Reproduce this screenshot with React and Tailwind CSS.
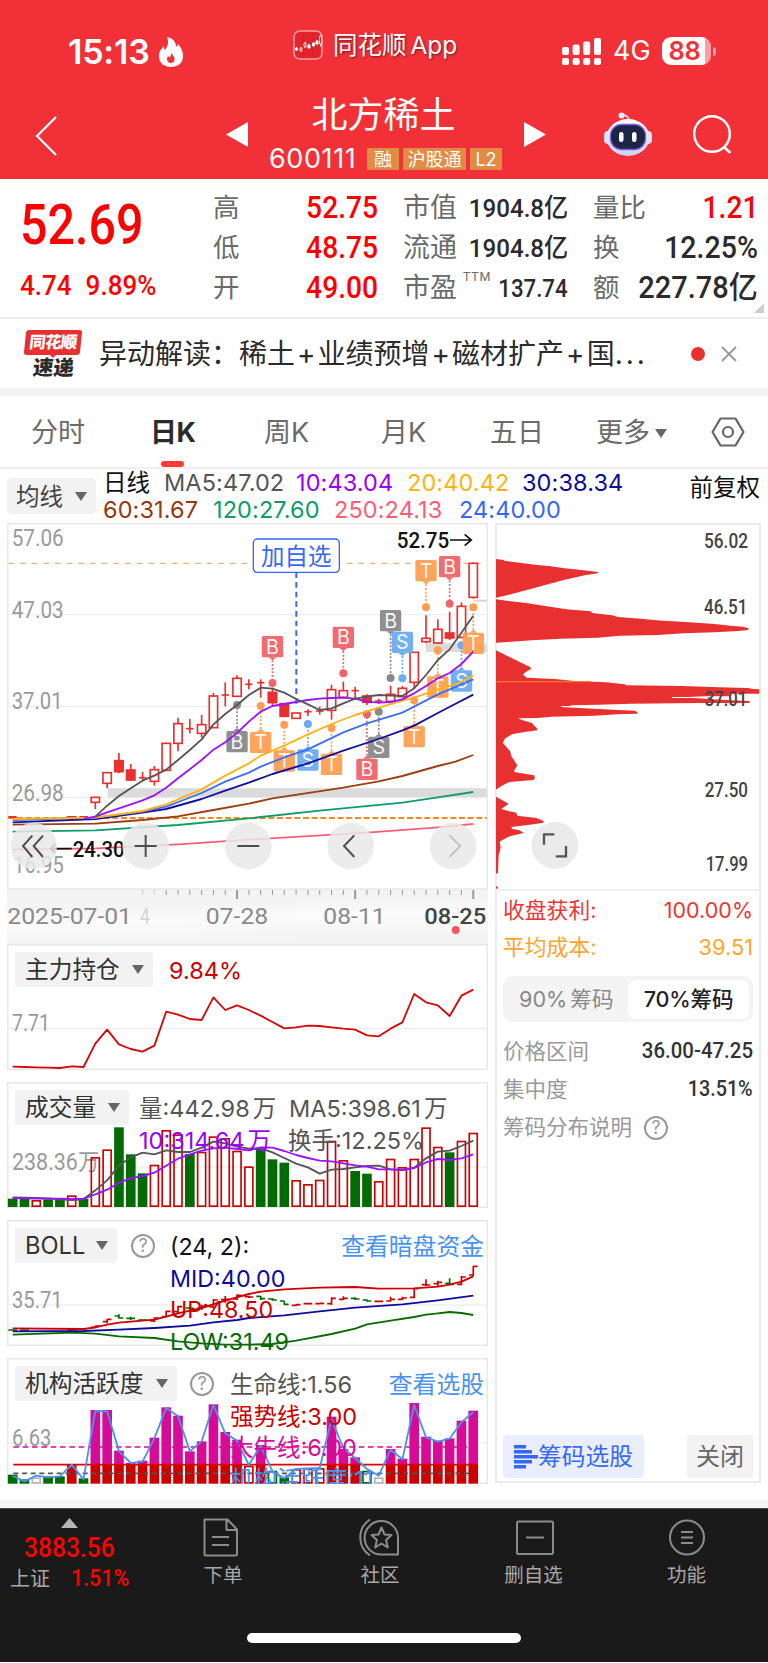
import React, { useState } from 'react';

const CN = 'font-["Inter","Noto_Sans_CJK_SC",sans-serif]';
const DIN = 'font-["Roboto","Noto_Sans_CJK_SC",sans-serif]';

// horizontal position of the n-th trading day, chart units are 1/3 px
const cx = (i) => 38 + i * 35.43;
const series = (ys, start = 0) => ys.map((y, i) => `${cx(i + start).toFixed(1)},${y}`).join(' ');
const pairs = (pts) => pts.map(([i, y]) => `${cx(i).toFixed(1)},${y}`).join(' ');

// [day, bodyTop, bodyBottom, high, low, filled]
const candles = [
  [7, 847, 862, 847, 882], [8, 773, 805, 773, 820], [9, 737, 770, 714, 775, 1], [10, 765, 795, 747, 798, 1],
  [11, 788, 788, 771, 795], [12, 764, 799, 753, 812], [13, 685, 766, 683, 768], [14, 626, 685, 608, 709],
  [15, 641, 641, 612, 655], [16, 629, 655, 600, 668], [17, 543, 638, 534, 638], [18, 540, 540, 502, 574],
  [19, 490, 544, 481, 546], [20, 508, 508, 493, 523], [21, 503, 503, 493, 548], [22, 532, 563, 518, 573, 1],
  [23, 566, 604, 564, 606, 1], [24, 594, 610, 594, 610], [25, 590, 590, 583, 603], [26, 588, 588, 575, 599],
  [27, 524, 586, 509, 614], [28, 527, 547, 500, 549], [29, 527, 527, 515, 550], [30, 543, 562, 538, 570, 1],
  [31, 558, 558, 551, 566], [32, 538, 559, 512, 562], [33, 520, 545, 513, 547], [34, 412, 502, 412, 520],
  [35, 370, 380, 301, 385], [36, 343, 384, 313, 386], [37, 354, 369, 290, 375, 1], [38, 274, 367, 262, 370],
  [39, 145, 247, 142, 251],
];

const ma5 = [905, 872, 843, 820, 797, 782, 764, 735, 705, 673, 628, 597, 570, 540, 518, 521, 533, 552, 568, 585, 580, 565, 551, 545, 540, 542, 543, 520, 480, 435, 403, 353, 302];
const ma10 = [911, 905, 892, 880, 868, 856, 841, 818, 790, 763, 735, 704, 682, 654, 620, 590, 573, 567, 561, 555, 551, 549, 548, 551, 560, 563, 561, 553, 535, 513, 490, 474, 447, 410];
const maLines = [
  ['#ff5c78', [[0, 1004], [7, 1000], [14, 988], [20, 974], [30, 953], [36, 937], [39, 927]]],
  ['#0e9c69', [[0, 950], [7, 946], [14, 930], [20, 910], [26, 887], [33, 863], [36, 847], [39, 831]]],
  ['#9c3d12', [[0, 929], [7, 926], [11, 915], [14, 904], [17, 885], [20, 866], [22, 850], [28, 818], [31, 799], [33, 783], [36, 753], [37.5, 740], [39, 720]]],
  ['#1210a0', [[0, 922], [7, 912], [11, 893], [13, 882], [16, 852], [18, 827], [20, 803], [22, 777], [25, 745], [28, 707], [31, 672], [33, 646], [34, 632], [36, 594], [37.3, 570], [39, 539]]],
  ['#3f6df0', [[0, 915], [7, 908], [11, 890], [13, 875], [16, 834], [18, 800], [20, 773], [21, 755], [23, 727], [25, 703], [28, 652], [30, 625], [33, 593], [36, 538], [39, 493]]],
  ['#ffb215', [[0, 912], [7, 908], [11, 888], [13, 868], [15, 838], [16, 823], [18, 782], [20, 745], [21, 722], [23, 692], [25, 658], [27, 627], [29, 600], [31, 578], [33, 557], [34, 548], [36, 523], [37.6, 507], [39, 482]]],
];

const RED = '#ee6568';
const ORANGE = '#ff9f52';
const BLUE = '#6cabf2';
const GRAY = '#898989';
// [letter, color, day, boxCenterY, dotY]
const markers = [
  ['B', GRAY, 19, 680, 570], ['B', RED, 22, 395, 504], ['T', ORANGE, 21, 682, 573], ['T', ORANGE, 23, 738, 629],
  ['S', BLUE, 25, 735, 627], ['T', ORANGE, 27, 748, 639], ['B', RED, 28, 367, 475], ['B', RED, 30, 763, 598],
  ['S', GRAY, 31, 697, 590], ['B', GRAY, 32, 317, 489], ['S', BLUE, 33, 382, 490], ['T', ORANGE, 34, 665, 556],
  ['T', ORANGE, 35, 167, 277], ['B', RED, 37, 155, 266], ['T', ORANGE, 36, 516, 406], ['S', BLUE, 38, 498, 391],
  ['T', ORANGE, 39, 385, 277],
];

const holding = [411, 412, 413, 414, 415, 410, 412, 342, 300, 344, 358, 366, 348, 246, 255, 268, 271, 203, 241, 227, 241, 258, 277, 296, 293, 288, 289, 293, 297, 300, 317, 320, 297, 278, 193, 218, 227, 259, 198, 180];

const volume = 'g806 g806 r810 g808 g810 r796 g806 r681 r658 g592 g673 g730 r704 r600 r613 g672 r665 r619 r624 r662 r709 g655 g688 g698 r750 r762 r749 r632 r690 g723 g731 r753 r686 r711 r686 r592 r650 g667 r632 r608'.split(' ');
const vol5 = [802, 803, 804, 805, 808, 810, 808, 781, 751, 707, 682, 668, 673, 661, 666, 666, 653, 635, 640, 650, 656, 655, 667, 684, 701, 712, 731, 719, 717, 712, 708, 707, 718, 720, 713, 685, 665, 662, 648, 632];
const vol10 = [804, 805, 806, 806, 806, 807, 806, 793, 779, 758, 745, 738, 728, 707, 686, 673, 662, 655, 653, 657, 661, 652, 653, 663, 675, 684, 692, 694, 700, 706, 710, 718, 718, 720, 714, 697, 687, 690, 685, 673];

const bollUp = [[0, 353], [6, 355], [7, 350], [8, 342], [9, 336], [12, 327], [13, 318], [14, 308], [15, 300], [16, 292], [18, 270], [20, 250], [21, 243], [23, 236], [26, 231], [29, 229], [31, 234], [34, 233], [36, 228], [37, 222], [38, 213], [39, 197]];
const bollMid = [[0, 362], [6, 361], [9, 357], [12, 352], [15, 345], [17, 335], [19, 328], [20, 322], [23, 314], [26, 302], [29, 291], [33, 281], [36, 269], [39, 255]];
const bollLow = [[0, 372], [5, 366], [7, 369], [9, 377], [12, 382], [14, 392], [16, 398], [18, 402], [20, 402], [22, 400], [24, 390], [27, 370], [29, 354], [30, 341], [32, 330], [34, 319], [35, 312], [36, 308], [37, 304], [38, 307], [39, 313]];
// [day, color, open, high, low, close]
const bollBars = [
  [0, 'g', 358, 357, 360, 358], [1, 'g', 358, 357, 360, 358], [5, 'r', 358, 356, 360, 357], [7, 'r', 350, 345, 352, 346],
  [8, 'r', 333, 325, 338, 326], [9, 'g', 316, 311, 324, 322], [10, 'g', 323, 318, 328, 323], [11, 'g', 328, 326, 330, 328],
  [12, 'r', 331, 320, 334, 322], [13, 'r', 318, 300, 320, 302], [14, 'r', 303, 286, 308, 288], [15, 'g', 292, 288, 296, 293],
  [16, 'r', 292, 282, 298, 287], [17, 'r', 289, 265, 292, 268], [18, 'r', 267, 256, 276, 266], [19, 'r', 265, 251, 268, 254],
  [20, 'r', 258, 255, 262, 259], [21, 'g', 257, 256, 268, 264], [22, 'g', 265, 262, 270, 268], [23, 'g', 271, 271, 282, 281],
  [24, 'r', 284, 281, 287, 282], [25, 'r', 279, 277, 281, 279], [26, 'r', 279, 276, 281, 278], [27, 'r', 279, 260, 283, 263],
  [28, 'r', 266, 257, 268, 263], [29, 'g', 263, 260, 268, 265], [30, 'g', 268, 266, 273, 271], [31, 'r', 272, 270, 274, 272],
  [32, 'r', 271, 258, 273, 266], [33, 'r', 266, 258, 268, 262], [34, 'r', 260, 233, 263, 234], [35, 'r', 222, 206, 226, 223],
  [36, 'r', 219, 210, 226, 215], [37, 'g', 218, 203, 222, 221], [38, 'r', 221, 196, 224, 199], [39, 'r', 193, 166, 196, 167],
];

// m = magenta above the red threshold, upper case = hollow bar
const activity = 'g792 g806 W800 g797 g797 r760 g803 m598 m598 m720 m757 m750 m681 m590 m615 m722 m692 m581 m664 m687 R765 m703 G780 g800 R775 R773 R772 m618 m715 m740 G780 W800 m715 m744 m577 m678 m690 m683 m630 m600'.split(' ');
const activityLine = [796, 812, 795, 800, 797, 762, 806, 601, 602, 722, 757, 753, 683, 592, 616, 722, 692, 583, 668, 690, 763, 705, 782, 803, 775, 773, 772, 626, 712, 742, 775, 795, 717, 746, 583, 680, 693, 684, 635, 604];

const barColor = { g: '#046b04', r: '#cc0000', w: '#b5b5b5' };

const chips = 'M34 134 L58 137 L58 139 L110 146 L158 152 L198 156 L240 162 L310 169 L340 173 L340 177 L300 183 L240 196 L160 218 L90 237 L34 250 Z M34 255 L72 260 L125 266 L196 277 L245 285 L318 291 L322 296 L383 303 L400 308 L467 313 L535 319 L603 323 L690 329 L745 335 L775 337 L791 342 L791 347 L760 350 L690 354 L598 357 L520 362 L405 364 L340 370 L226 373 L142 378 L34 385 Z M34 408 L136 458 L140 463 L120 475 L115 481 L126 490 L210 494 L270 500 L365 504 L420 510 L425 513 L590 515 L705 519 L790 521 L805 524 L824 525 L824 538 L735 538 L735 546 L660 546 L612 548 L562 548 L562 551 L630 551 L680 555 L740 558 L795 560 L795 566 L640 566 L440 568 L340 571 L258 573 L258 575 L229 575 L229 578 L328 583 L400 587 L450 589 L458 593 L458 598 L398 600 L330 604 L200 607 L158 611 L100 612 L112 617 L142 626 L158 644 L158 648 L118 653 L82 660 L62 672 L54 685 L76 710 L80 725 L98 753 L88 770 L90 773 L110 777 L148 783 L151 790 L147 797 L74 803 L50 815 L34 826 Z M34 847 L72 868 L50 884 L62 888 L95 895 L98 904 L155 911 L175 919 L177 925 L130 932 L80 938 L82 943 L105 948 L117 956 L75 966 L55 976 L45 982 L48 1000 L42 1022 L40 1076 L34 1078 Z';

function ChartText({ x, y, w, size = 69, fill = '#9a9a9a', weight = 400, children }) {
  return (
    <text x={x} y={y} textLength={w} lengthAdjust="spacingAndGlyphs" fontSize={size} fontWeight={weight} fill={fill} className={DIN}>
      {children}
    </text>
  );
}

function Bars({ data, base, split }) {
  return data.map((item, i) => {
    const kind = item[0];
    const y = Number(item.slice(1));
    const x = cx(i) - 14.5;
    if (kind === 'm') {
      return (
        <g key={i}>
          <rect x={x} y={y} width="29" height={split - y} fill="#d80b98" />
          <rect x={x} y={split} width="29" height={base - split} fill="#cc0000" />
        </g>
      );
    }
    const hollow = kind === kind.toUpperCase() || (!split && kind === 'r');
    const color = barColor[kind.toLowerCase()];
    return hollow ? (
      <rect key={i} x={x + 2.5} y={y + 2.5} width="24" height={base - y - 5} fill="none" stroke={color} strokeWidth="5" />
    ) : (
      <rect key={i} x={x} y={y} width="29" height={base - y} fill={color} />
    );
  });
}

function Line({ points, color, width = 5.5, dash }) {
  return <polyline points={points} fill="none" stroke={color} strokeWidth={width} strokeDasharray={dash} strokeLinejoin="round" />;
}

function Caret({ className = '' }) {
  return (
    <svg viewBox="0 0 12 9" className={`h-[9px] w-3 shrink-0 ${className}`}>
      <path d="M0 0h12L6 9z" fill="#666" />
    </svg>
  );
}

function Help({ className = '' }) {
  return (
    <span className={`flex h-6 w-6 shrink-0 items-center justify-center rounded-full border-2 border-[#999] text-[18px] leading-none text-[#999] ${className}`}>
      ?
    </span>
  );
}

function Picker({ width, children }) {
  return (
    <button type="button" className={`flex h-[35px] shrink-0 items-center justify-between rounded-[3px] bg-[#f2f2f2] pr-[9px] pl-[10px] text-[23.7px] whitespace-nowrap text-[#333] ${width}`}>
      {children}
      <Caret />
    </button>
  );
}

function StatusBar() {
  return (
    <div className="flex h-[92px] items-end text-white">
      <div className="mb-[23px] ml-[68px] flex items-center">
        <span className="w-[83px] text-[34px] leading-[34px] font-semibold tracking-[-0.2px]">15:13</span>
        <svg viewBox="0 0 24 30" className="ml-2 h-[30px] w-6">
          <path d="M8 0c6 1 9 5 9 10 1-1 2-2 2-3 3 3 5 7 5 12 0 7-5 11-12 11S0 26 0 19c0-5 3-8 5-10 0 2 0 3 1 4C9 9 10 5 8 0z" fill="#fff" />
          <path d="M12 15c0 2 3.500 3.500 3.500 7 0 2.500-1.500 4-3.500 4s-4-1.500-4-4c0-1.500.6-2.500 1.500-3.300 0 1 .3 1.700 1 1.600 1.500-.8 1.500-2.300 1.500-5.300z" fill="#f23038" />
        </svg>
      </div>
      <div className="mb-[32px] ml-[110px] flex items-center">
        <svg viewBox="0 0 30 30" className="h-[30px] w-[30px]">
          <rect x="1" y="1" width="28" height="28" rx="6" fill="#e3242b" stroke="#f8a0a3" strokeWidth="1.500" />
          <path d="M10 3v24M20 3v24" stroke="#c91d24" strokeWidth=".7" />
          <g fill="#fff" stroke="#fff">
            <path d="M3.500 17v4M8 17v5M12 12v6M16 14v5M20.500 12v5M24 10v5M27.500 5v12" strokeWidth=".8" />
            <path d="M2.500 18h2v2h-2zM15 15h2v3h-2zM19.500 13h2v3h-2zM23 11h2v3h-2z" />
            <path d="M7 18h2v3H7zM11 13h2v4h-2zM26.500 6h2v8h-2z" fill="#e3242b" strokeWidth=".8" />
          </g>
        </svg>
        <span className="ml-[10px] text-[24.5px] leading-[28px] whitespace-nowrap [text-shadow:1px_1px_2px_rgba(0,0,0,.5)] [word-spacing:-3px]">同花顺 App</span>
      </div>
      <div className="mr-[52px] mb-[27px] ml-auto flex items-center">
        <svg viewBox="0 0 39 27" className="h-[27px] w-[39px]" fill="#fff">
          <rect x="0" y="9" width="7" height="8" rx="2" />
          <rect x="10.600" y="6.500" width="7" height="10.500" rx="2" />
          <rect x="21.200" y="3.500" width="7" height="13.500" rx="2" />
          <rect x="32" y="0" width="7" height="17" rx="2" />
          <rect x="0" y="20" width="7" height="7" rx="2" />
          <rect x="10.600" y="20" width="7" height="7" rx="2" />
          <rect x="21.200" y="20" width="7" height="7" rx="2" />
          <rect x="32" y="20" width="7" height="7" rx="2" />
        </svg>
        <span className="ml-3 w-[37px] text-[27px] leading-7">4G</span>
        <span className="ml-3 flex h-[28px] w-[49px] items-center justify-center rounded-[9px] bg-[linear-gradient(90deg,#fff_88%,#fb9da1_88%)] pr-1 text-[25.5px] font-semibold tracking-[-0.3px] text-[#f23038]">
          88
        </span>
        <span className="ml-[2px] h-[9px] w-[3px] rounded-r-full bg-[#fb9da1]" />
      </div>
    </div>
  );
}

function Header() {
  return (
    <header className="h-[179px] bg-[#f23038]">
      <StatusBar />
      <div className="flex h-[87px] items-start text-white">
        <svg viewBox="0 0 22 40" className="mt-6 ml-[35px] h-10 w-[22px]">
          <path d="M21 1L2 20l19 19" fill="none" stroke="#fff" strokeWidth="2.200" />
        </svg>
        <svg viewBox="0 0 22 25" className="mt-[30px] ml-[169px] h-[25px] w-[22px]">
          <path d="M22 0v25L0 12.500z" fill="#fff" />
        </svg>
        <div className="ml-[21px] flex w-[235px] flex-col items-center">
          <h1 className="h-[48px] pt-[2px] pr-[6px] text-[36px] leading-[42px] font-normal">北方稀土</h1>
          <div className="flex items-center gap-1 self-start">
            <span className="mr-[5px] w-[89px] text-[27px] leading-[38px] tracking-[0.6px]">600111</span>
            <span className="flex h-[22px] w-8 items-center justify-center bg-[#e28b45] text-[18px]">融</span>
            <span className="flex h-[22px] w-[63px] items-center justify-center bg-[#e28b45] text-[18px]">沪股通</span>
            <span className="flex h-[22px] w-8 items-center justify-center bg-[#e28b45] text-[18px]">L2</span>
          </div>
        </div>
        <svg viewBox="0 0 22 25" className="mt-[30px] ml-5 h-[25px] w-[22px]">
          <path d="M0 0v25l22-12.500z" fill="#fff" />
        </svg>
        <svg viewBox="0 0 48 44" className="mt-5 ml-[58px] h-11 w-12">
          <defs>
            <linearGradient id="shell" x1="0" y1="0" x2="0" y2="1">
              <stop offset="0" stopColor="#fff" />
              <stop offset="1" stopColor="#cdd0f2" />
            </linearGradient>
          </defs>
          <path d="M17 3.500c5-1 7.500 1 8 5" fill="none" stroke="#d9d9f0" strokeWidth="1.800" />
          <circle cx="17.500" cy="3.500" r="3" fill="#eceafa" />
          <rect x="0" y="19" width="8" height="13" rx="4" fill="#dcdaf4" />
          <rect x="40" y="19" width="8" height="13" rx="4" fill="#dcdaf4" />
          <ellipse cx="24" cy="25.500" rx="21.500" ry="18.500" fill="url(#shell)" />
          <rect x="6.500" y="12.500" width="35" height="25" rx="11" fill="#1d2547" stroke="#7d5ce0" strokeWidth="1.300" />
          <rect x="15" y="20" width="4.500" height="10" rx="2.200" fill="#fff" />
          <rect x="28" y="20" width="4.500" height="10" rx="2.200" fill="#fff" />
        </svg>
        <svg viewBox="0 0 40 40" className="mt-[23px] ml-[41px] h-10 w-10">
          <circle cx="19" cy="19" r="17.800" fill="none" stroke="#fff" strokeWidth="2.400" />
          <path d="M31 32l6.500 6" stroke="#fff" strokeWidth="2.600" />
        </svg>
      </div>
    </header>
  );
}

function Quote() {
  const prices = [['高', '52.75'], ['低', '48.75'], ['开', '49.00']];
  return (
    <section className={`relative flex h-[140px] border-b-2 border-[#ededed] whitespace-nowrap ${DIN}`}>
      <div className="w-[213px] text-[#f00]">
        <div className="mt-[9px] ml-[20px] h-[72px] origin-left scale-x-[.88] text-[55px] leading-[74px] font-medium">52.69</div>
        <div className="mt-[12px] ml-5 flex h-7 origin-left scale-x-[.93] gap-[15px] text-[28px] leading-7 font-medium">
          <span>4.74</span>
          <span>9.89%</span>
        </div>
      </div>
      <div className="mt-[9px] w-[165px]">
        {prices.map(([label, value]) => (
          <div key={label} className="flex h-10 items-center justify-between">
            <span className="text-[26.5px] text-[#6b6b6b]">{label}</span>
            <span className="origin-right scale-x-[.91] text-[31px] font-medium text-[#f00]">{value}</span>
          </div>
        ))}
      </div>
      <div className="mt-[9px] ml-[25px] w-[165px] text-[26.5px] text-[#6b6b6b]">
        <div className="flex h-10 items-center justify-between">
          <span className="shrink-0 text-[27px]">市值</span>
          <span className="-ml-4 origin-right scale-x-[.91] font-medium text-[#2b2b2b]">1904.8亿</span>
        </div>
        <div className="flex h-10 items-center justify-between">
          <span className="shrink-0 text-[27px]">流通</span>
          <span className="-ml-4 origin-right scale-x-[.91] font-medium text-[#2b2b2b]">1904.8亿</span>
        </div>
        <div className="flex h-10 items-center">
          <span className="shrink-0 text-[27px]">市盈</span>
          <sup className="top-[-11px] ml-[6px] text-[12.5px] tracking-[0.8px]">TTM</sup>
          <span className="-ml-4 flex-1 origin-right scale-x-[.84] text-right font-medium text-[#2b2b2b]">137.74</span>
        </div>
      </div>
      <div className="mt-[9px] ml-[25px] w-[165px]">
        <div className="flex h-10 items-center justify-between">
          <span className="text-[26.5px] text-[#6b6b6b]">量比</span>
          <span className="origin-right scale-x-[.91] text-[31px] font-medium text-[#f00]">1.21</span>
        </div>
        <div className="flex h-10 items-center justify-between">
          <span className="text-[26.5px] text-[#6b6b6b]">换</span>
          <span className="origin-right scale-x-[.92] text-[31px] font-medium text-[#2b2b2b]">12.25%</span>
        </div>
        <div className="flex h-10 items-center justify-between">
          <span className="text-[26.5px] text-[#6b6b6b]">额</span>
          <span className="-ml-4 origin-right scale-x-[.935] text-[31px] font-medium text-[#2b2b2b]">227.78亿</span>
        </div>
      </div>
      <svg viewBox="0 0 10 10" className="absolute right-1 bottom-1 h-[10px] w-[10px]">
        <path d="M10 0v10H0z" fill="#ccc" />
      </svg>
    </section>
  );
}

function News() {
  return (
    <section className="flex h-[69px] items-center">
      <div className="ml-[24px] flex w-[58px] flex-col items-center">
        <span className="flex h-[25px] w-[56px] -skew-x-6 items-center justify-center rounded-[3px] bg-[#e93030] text-[16.5px] font-black tracking-[-0.8px] text-white">同花顺</span>
        <svg viewBox="0 0 8 4" className="h-[3px] w-2">
          <path d="M0 0h8L4 4z" fill="#e93030" />
        </svg>
        <span className="-skew-x-6 text-[20.500px] leading-5 font-black text-[#2b2b2b]">速递</span>
      </div>
      <p className="ml-[17px] w-[560px] text-[28px] whitespace-nowrap text-[#2b2b2b]">
        异动解读：稀土<span className="mx-[2px]">+</span>业绩预增<span className="mx-[2px]">+</span>磁材扩产<span className="mx-[2px]">+</span>国<span className="tracking-[3px]">...</span>
      </p>
      <span className="ml-[32px] h-[14px] w-[14px] rounded-full bg-[#e93030]" />
      <svg viewBox="0 0 16 16" className="ml-4 h-4 w-4">
        <path d="M1 1l14 14M15 1L1 15" stroke="#999" strokeWidth="1.800" />
      </svg>
    </section>
  );
}

function Tabs() {
  const [active, setActive] = useState('日K');
  const tabs = [
    ['分时', 'ml-[31px] w-[119px]'], ['日K', 'w-[114px]'], ['周K', 'w-[117px]'], ['月K', 'w-[109px]'], ['五日', 'w-[106px]'],
  ];
  return (
    <nav className="flex h-[73px] items-center border-b-2 border-[#f0f0f0] pt-[3px] text-[27px] whitespace-nowrap text-[#6b6b6b]">
      {tabs.map(([name, size]) => (
        <button key={name} type="button" onClick={() => setActive(name)} className={`relative h-full text-left ${size} ${active === name ? 'font-bold tracking-[-0.5px] text-[#2b2b2b]' : ''}`}>
          {name}
          {active === name && <span className="absolute bottom-0 left-[11px] h-[6px] w-[23px] rounded-[3px] bg-[#ff3a30]" />}
        </button>
      ))}
      <span>更多</span>
      <Caret className="ml-[5px]" />
      <svg viewBox="0 0 34 30" className="-mt-[3px] ml-[44px] h-[30px] w-[34px]" fill="none" stroke="#666" strokeWidth="2.200">
        <path d="M9.500 1.500h15L32.500 15l-8 13.500h-15L1.500 15z" strokeLinejoin="round" />
        <circle cx="17" cy="15" r="5" />
      </svg>
    </nav>
  );
}

function Legend() {
  return (
    <div className="flex h-[54px] pl-[7px] text-[23.5px] leading-[27px] whitespace-nowrap">
      <button type="button" className="mt-[9px] flex h-9 w-[89px] items-center justify-between rounded-[4px] bg-[#f2f2f2] px-[9px] text-[#444]">
        均线
        <Caret />
      </button>
      <div className="ml-[7px] tracking-[0.1px]">
        <div className="flex gap-[14px]">
          <span className="w-[47px] text-[#111]">日线</span>
          <span className="w-[118px] text-[#555]">MA5:47.02</span>
          <span className="w-[97px] text-[#9a00ff]">10:43.04</span>
          <span className="w-[101px] text-[#ffb215]">20:40.42</span>
          <span className="text-[#0e0b99]">30:38.34</span>
        </div>
        <div className="flex gap-4">
          <span className="w-[94px] text-[#94380f]">60:31.67</span>
          <span className="w-[105px] text-[#0e9c69]">120:27.60</span>
          <span className="w-[109px] text-[#ff5c78]">250:24.13</span>
          <span className="text-[#3668f4]">24:40.00</span>
        </div>
      </div>
      <span className="mt-[5px] mr-2 ml-auto text-[#111]">前复权</span>
    </div>
  );
}

function Marker({ letter, color, day, box, dot }) {
  const x = cx(day);
  const above = box < dot;
  const edge = above ? box + 32 : box - 32;
  const tip = above ? edge + 9 : edge - 9;
  return (
    <g>
      <line x1={x} x2={x} y1={tip} y2={dot} stroke={color} strokeWidth="5" strokeDasharray="6 5" />
      <circle cx={x} cy={dot} r="12" fill={color} />
      <path d={`M${x - 12} ${edge}L${x} ${tip}L${x + 12} ${edge}z`} fill={color} />
      <rect x={x - 32} y={box - 32} width="64" height="64" rx="5" fill={color} opacity=".95" />
      <text x={x} y={box + 21} textAnchor="middle" fontSize="59" fill="#fff" fillOpacity=".95" className={CN}>{letter}</text>
    </g>
  );
}

function RoundButton({ x, children, muted }) {
  return (
    <g stroke={muted ? '#c4c4c4' : '#4d4d4d'} strokeWidth="6" fill="none">
      <circle cx={x} cy="993" r="70" fill="#e9e9e9" fillOpacity=".86" stroke="none" />
      <g transform={`translate(${x} 993)`}>{children}</g>
    </g>
  );
}

function KLineChart() {
  return (
    <svg viewBox="21 24 1443 1101" className="block h-[367px] w-[481px]">
      <rect x="23" y="26" width="1439" height="1096" fill="#fff" stroke="#e8e8e8" strokeWidth="5" />
      <path d="M25 299H1460M25 574H1460M25 848H1460" stroke="#efefef" strokeWidth="4" />
      <path d="M323 833H1460" stroke="#dbdbdb" strokeWidth="27" />
      <path d="M1278 398H1460" stroke="#dbdbdb" strokeWidth="26" />
      <path d="M1422 257H1460" stroke="#d6d6d6" strokeWidth="6" />
      <path d="M25 145H1460" stroke="#e0b77e" strokeWidth="3.500" strokeDasharray="17 18" />
      <path d="M25 909H1460" stroke="#f58a25" strokeWidth="5.500" strokeDasharray="18 8" />
      <ChartText x="35" y="94" w="156">57.06</ChartText>
      <ChartText x="35" y="308" w="156">47.03</ChartText>
      <ChartText x="35" y="583" w="153">37.01</ChartText>
      <ChartText x="35" y="857" w="156">26.98</ChartText>
      <ChartText x="40" y="1074" w="151">16.95</ChartText>
      <path d="M25 906H50M200 906H230M238 906H264" stroke="#e93030" strokeWidth="6" />
      {candles.map(([i, top, bottom, high, low, filled]) => (
        <g key={i} stroke="#e93030" strokeWidth="5" fill={filled ? '#e93030' : '#fff'}>
          <line x1={cx(i)} x2={cx(i)} y1={high} y2={low} />
          {top === bottom ? (
            <line x1={cx(i) - 11} x2={cx(i) + 11} y1={top} y2={top} />
          ) : (
            <rect x={cx(i) - 12.5} y={top} width="25" height={bottom - top} />
          )}
        </g>
      ))}
      {markers.map(([letter, color, day, box, dot]) => (
        <Marker key={`${letter}${day}`} letter={letter} color={color} day={day} box={box} dot={dot} />
      ))}
      <path d="M889 172V574" stroke="#3668f4" strokeWidth="6" strokeDasharray="17 12" />
      {maLines.map(([color, pts]) => (
        <Line key={color} points={pairs(pts)} color={color} />
      ))}
      <Line points={series(ma10, 6)} color="#9a12ff" />
      <Line points={series(ma5, 7)} color="#555" />
      <rect x="760" y="72" width="258" height="100" rx="12" fill="#fff" stroke="#3668f4" strokeWidth="4" />
      <ChartText x="783" y="150" w="211" size="71" fill="#3668f4">加自选</ChartText>
      <ChartText x="1190" y="98" w="158" size="64" weight="500" fill="#111">52.75</ChartText>
      <path d="M1350 75H1414M1394 58l20 17-20 17" fill="none" stroke="#111" strokeWidth="5" />
      <path d="M154 1001H215M166 988l-14 13 14 13" fill="none" stroke="#111" strokeWidth="5" />
      <ChartText x="218" y="1026" w="156" size="64" weight="500" fill="#111">24.30</ChartText>
      <RoundButton x="101"><path d="M-4-31L-32 0l28 33M28-31L0 0l28 33" /></RoundButton>
      <RoundButton x="437"><path d="M-33 0H33M0-33V33" /></RoundButton>
      <RoundButton x="745"><path d="M-33 0H33" /></RoundButton>
      <RoundButton x="1052"><path d="M11-32L-20 0l31 33" /></RoundButton>
      <RoundButton x="1359" muted><path d="M-11-32L22 0l-33 33" /></RoundButton>
    </svg>
  );
}

function DateAxis() {
  return (
    <svg viewBox="21 1125 1443 162" className="block h-[54px] w-[481px]">
      <defs>
        <linearGradient id="axis" x1="0" y1="0" x2=".25" y2="1">
          <stop offset="0" stopColor="#f4f4f4" />
          <stop offset=".35" stopColor="#f4f4f4" />
          <stop offset=".6" stopColor="#fbfbfb" />
          <stop offset="1" stopColor="#f4f4f4" />
        </linearGradient>
      </defs>
      <rect x="21" y="1125" width="1443" height="162" fill="url(#axis)" />
      {Array.from({ length: 29 }, (_, k) => k + 11).map((i) => (
        <line key={i} x1={cx(i)} x2={cx(i)} y1="1123" y2={[19, 29, 39].includes(i) ? 1152 : 1140} stroke={i > 12 ? '#999' : '#ccc'} strokeWidth={[19, 29, 39].includes(i) ? 6 : 3} />
      ))}
      <ChartText x="22" y="1227" w="374" size="67" fill="#8a8a8a">2025-07-01</ChartText>
      <ChartText x="419" y="1227" w="30" size="67" fill="#d5d5d5">4</ChartText>
      <ChartText x="617" y="1227" w="188" size="67" fill="#8a8a8a">07-28</ChartText>
      <ChartText x="970" y="1227" w="187" size="67" fill="#8a8a8a">08-11</ChartText>
      <ChartText x="1273" y="1227" w="186" size="67" weight="500" fill="#444">08-25</ChartText>
      <circle cx="1367" cy="1245" r="12" fill="#f9585c" />
    </svg>
  );
}

function Panel({ box, children, overlay, clip = '' }) {
  return (
    <section className="relative mb-3 h-[126px] w-[481px]">
      <svg viewBox={`21 ${box} 1443 378`} className="absolute inset-0 h-full w-full">
        <rect x="23" y={box + 2} width="1439" height="374" fill="#fff" stroke="#e8e8e8" strokeWidth="5" />
        {children}
      </svg>
      <div className={`relative flex h-full items-start pt-2 pl-2 text-[24px] leading-[31.6px] whitespace-nowrap ${clip}`}>{overlay}</div>
    </section>
  );
}

function Indicators() {
  return (
    <>
      <Panel
        box={43}
        overlay={
          <>
            <Picker width="w-[138px]">主力持仓</Picker>
            <span className="ml-[16px] pt-[3px] text-[23.5px] text-[#cc0000]">9.84%</span>
          </>
        }
      >
        <path d="M25 296H1460" stroke="#efefef" strokeWidth="4" />
        <ChartText x="36" y="305" w="114">7.71</ChartText>
        <Line points={series(holding)} color="#d40808" />
      </Panel>
      <Panel
        box={456}
        overlay={
          <>
            <Picker width="w-[114px]">成交量</Picker>
            <div className="ml-[10px] pt-[3px] text-[23.5px] text-[#555]">
              <div className="flex">
                <span className="w-[150px]">量:442.98<span className="ml-[3px]">万</span></span>
                <span>MA5:398.61<span className="ml-[3px]">万</span></span>
              </div>
              <div className="flex">
                <span className="w-[149px] text-[#9a00ff]">10:314.64<span className="ml-[3px]">万</span></span>
                <span>换手:12.25%</span>
              </div>
            </div>
          </>
        }
      >
        <path d="M25 711H1460" stroke="#efefef" strokeWidth="4" />
        <ChartText x="36" y="719" w="262">238.36万</ChartText>
        <Bars data={volume} base={831} />
        <Line points={series(vol5)} color="#555" />
        <Line points={series(vol10)} color="#9a12ff" />
      </Panel>
      <Panel
        box={28}
        overlay={
          <>
            <Picker width="w-[102px]">BOLL</Picker>
            <Help className="mt-[6px] ml-[14px]" />
            <div className="ml-[15px] pt-[3px] text-[23.3px]">
              <div className="text-[#111]">(24, 2):</div>
              <div className="text-[#0e0b99]">MID:40.00</div>
              <div className="text-[#cc0000]">UP:48.50</div>
              <div className="text-[#046b04]">LOW:31.49</div>
            </div>
            <a className="mr-[4px] ml-auto pt-[3px] text-[23.8px] text-[#4a92f0]">查看暗盘资金</a>
          </>
        }
      >
        <path d="M25 283H1460" stroke="#efefef" strokeWidth="4" />
        <ChartText x="36" y="292" w="152">35.71</ChartText>
        {bollBars.map(([i, c, open, high, low, close]) => (
          <path key={i} d={`M${cx(i) - 13} ${open}H${cx(i)}M${cx(i)} ${high}V${low}M${cx(i)} ${close}H${cx(i) + 13}`} fill="none" stroke={barColor[c]} strokeWidth="5" />
        ))}
        <Line points={pairs(bollUp)} color="#cc0000" />
        <Line points={pairs(bollMid)} color="#0e0b99" />
        <Line points={pairs(bollLow)} color="#046b04" />
      </Panel>
      <Panel
        box={442}
        clip="overflow-hidden"
        overlay={
          <>
            <Picker width="w-[162px]">机构活跃度</Picker>
            <Help className="mt-[6px] ml-[13px]" />
            <div className="ml-[16px] pt-[3px] text-[23.5px]">
              <div className="text-[#555]">生命线:1.56</div>
              <div className="text-[#cc0000]">强势线:3.00</div>
              <div className="text-[#d80b98]">大牛线:6.00</div>
              <div className="text-[#4a92f0]">机构活跃度:11</div>
            </div>
            <a className="mr-[4px] ml-auto pt-[3px] text-[23.8px] text-[#4a92f0]">查看选股</a>
          </>
        }
      >
        <path d="M25 697H1460" stroke="#efefef" strokeWidth="4" />
        <ChartText x="36" y="706" w="118">6.63</ChartText>
        <Bars data={activity} base={819} split={762} />
        <path d="M40 709H1420" stroke="#d80b98" strokeWidth="5" strokeDasharray="17 11" />
        <path d="M40 762H1434" stroke="#dc0000" strokeWidth="5.500" />
        <path d="M40 788H1410" stroke="#555" strokeWidth="5" strokeDasharray="15 11" />
        <Line points={series(activityLine)} color="#4a92f0" />
      </Panel>
    </>
  );
}

function ChipChart() {
  return (
    <svg viewBox="31 26 798 1098" className="block h-[366px] w-[266px]">
      <path d={chips} fill="#e93030" />
      <path d="M35 502H318" stroke="#f2772b" strokeWidth="4" />
      <rect x="34" y="1116" width="5" height="7" fill="#e93030" />
      <ChartText x="658" y="101" w="132" size="58" weight="500" fill="#444">56.02</ChartText>
      <ChartText x="658" y="299" w="130" size="58" weight="500" fill="#444">46.51</ChartText>
      <ChartText x="660" y="574" w="128" size="58" weight="500" fill="#444">37.01</ChartText>
      <ChartText x="660" y="849" w="130" size="58" weight="500" fill="#444">27.50</ChartText>
      <ChartText x="663" y="1070" w="127" size="58" weight="500" fill="#444">17.99</ChartText>
      <circle cx="211" cy="993" r="70" fill="#ebebeb" />
      <path d="M178 991v-31h31M244 995v31h-31" fill="none" stroke="#555" strokeWidth="7" />
    </svg>
  );
}

function ChipPanel() {
  return (
    <aside className="flex h-[960px] w-[266px] flex-col border-2 border-[#ececec]">
      <div className="-mx-[2px] -mt-[2px] border-b-2 border-[#efefef]">
        <ChipChart />
      </div>
      <div className="flex flex-1 flex-col px-[6px] text-[21.8px] whitespace-nowrap">
        <div className="flex h-[38px] items-center justify-between text-[#ee3535]">
          <span>收盘获利:</span>
          <span className="text-[21.5px]">100.00%</span>
        </div>
        <div className="flex h-[37px] items-center justify-between text-[#ffa52b]">
          <span>平均成本:</span>
          <span>39.51</span>
        </div>
        <div className="mt-[10px] flex h-[46px] items-center rounded-[10px] bg-[#f4f4f4] p-1 text-[21.6px] text-[#888]">
          <span className="w-[121px] pl-[12px] [word-spacing:-3px]">90% 筹码</span>
          <span className="flex h-[39px] flex-1 items-center justify-center rounded-[8px] bg-white font-medium tracking-[-0.2px] text-[#222]">70%筹码</span>
        </div>
        <div className="mt-[10px] flex h-[38px] items-center justify-between text-[21.5px] text-[#999]">
          <span>价格区间</span>
          <span className={`origin-right scale-x-[.95] font-medium text-[#333] ${DIN}`}>36.00-47.25</span>
        </div>
        <div className="flex h-[38px] items-center justify-between text-[21.5px] text-[#999]">
          <span>集中度</span>
          <span className={`origin-right scale-x-[.92] font-medium text-[#333] ${DIN}`}>13.51%</span>
        </div>
        <div className="flex h-[39px] items-center text-[21.5px] text-[#999]">
          <span>筹码分布说明</span>
          <Help className="ml-3" />
        </div>
        <div className="mt-auto mb-[3px] flex h-[43px] justify-between text-[24px]">
          <button type="button" className="flex w-[141px] items-center justify-center rounded-[4px] bg-[#e9edfe] text-[23.7px] text-[#3668f4]">
            <svg viewBox="0 0 24 24" className="h-6 w-6 shrink-0" fill="#3668f4">
              <path d="M0 0h12v3.500H0zM0 5h18v3.500H0zM0 10h24v3.500H0zM0 15h18v3.500H0zM0 20h12v3.500H0z" />
            </svg>
            筹码选股
          </button>
          <button type="button" className="w-[66px] rounded-[4px] bg-[#f3f3f3] text-[#666]">关闭</button>
        </div>
      </div>
    </aside>
  );
}

function NavItem({ label, width, children }) {
  return (
    <button type="button" className={`flex shrink-0 flex-col items-center pt-[8px] text-[19.5px] leading-6 whitespace-nowrap text-[#a8a8a8] ${width}`}>
      <svg viewBox="0 0 42 40" className="mb-[6px] h-10 w-[42px]" fill="none" stroke="#8c8c8c" strokeWidth="2" strokeLinejoin="round">
        {children}
      </svg>
      {label}
    </button>
  );
}

function BottomBar() {
  return (
    <footer className="h-[154px] border-t border-[#444] bg-[#1a1a1a]">
      <div className="flex">
        <div className={`w-[148px] shrink-0 ${DIN}`}>
          <svg viewBox="0 0 17 10" className="mt-[9px] ml-[61px] h-[10px] w-[17px]">
            <path d="M0 10h17L8.500 0z" fill="#b5b5b5" />
          </svg>
          <div className="mt-[5px] ml-[24px] origin-left scale-x-[.91] text-[27px] leading-[30px] font-medium text-[#f00]">3883.56</div>
          <div className="mt-[3px] flex items-center text-[20px] leading-[26px]">
            <span className="ml-[10px] w-[61px] text-[#a8a8a8]">上证</span>
            <span className="origin-left scale-x-[.93] text-[23px] font-medium text-[#f00]">1.51%</span>
          </div>
        </div>
        <NavItem label="下单" width="w-[150px]">
          <path d="M2.500 2.500h23l9.500 10V37a1.500 1.500 0 0 1-1.500 1.500H4A1.500 1.500 0 0 1 2.500 37zM24.500 2.500V13H35M10 20h17M10 28h17" />
        </NavItem>
        <NavItem label="社区" width="w-[164px]">
          <path d="M11 2.500C-2 11-2 30 11 38.500" />
          <path d="M39 37.500V21a16.700 16.700 0 1 0-16.700 16.500z" />
          <path d="M22.500 10.500l3 7 7 .6-5.400 5 1.700 7.400-6.300-4-6.300 4 1.700-7.400-5.400-5 7-.6z" />
        </NavItem>
        <NavItem label="删自选" width="w-[143px]">
          <rect x="4" y="4.500" width="36" height="32.500" rx="1.500" />
          <path d="M13 20.500h18" />
        </NavItem>
        <NavItem label="功能" width="w-[163px]">
          <circle cx="21" cy="20.500" r="17" />
          <path d="M15 15h12M15 20.500h12M15 26h12" />
        </NavItem>
      </div>
      <div className="mx-auto mt-[41px] h-[10px] w-[274px] rounded-full bg-white" />
    </footer>
  );
}

export default function App() {
  return (
    <div className={`h-[1663px] w-[768px] overflow-hidden bg-white ${CN}`}>
      <Header />
      <Quote />
      <News />
      <div className="h-2 bg-[#f4f4f4]" />
      <Tabs />
      <Legend />
      <main className="flex h-[977px] justify-between pr-[7px] pl-[7px]">
        <div className="w-[481px]">
          <KLineChart />
          <DateAxis />
          <Indicators />
        </div>
        <ChipPanel />
      </main>
      <div className="h-2 bg-[#f4f4f4]" />
      <BottomBar />
    </div>
  );
}
